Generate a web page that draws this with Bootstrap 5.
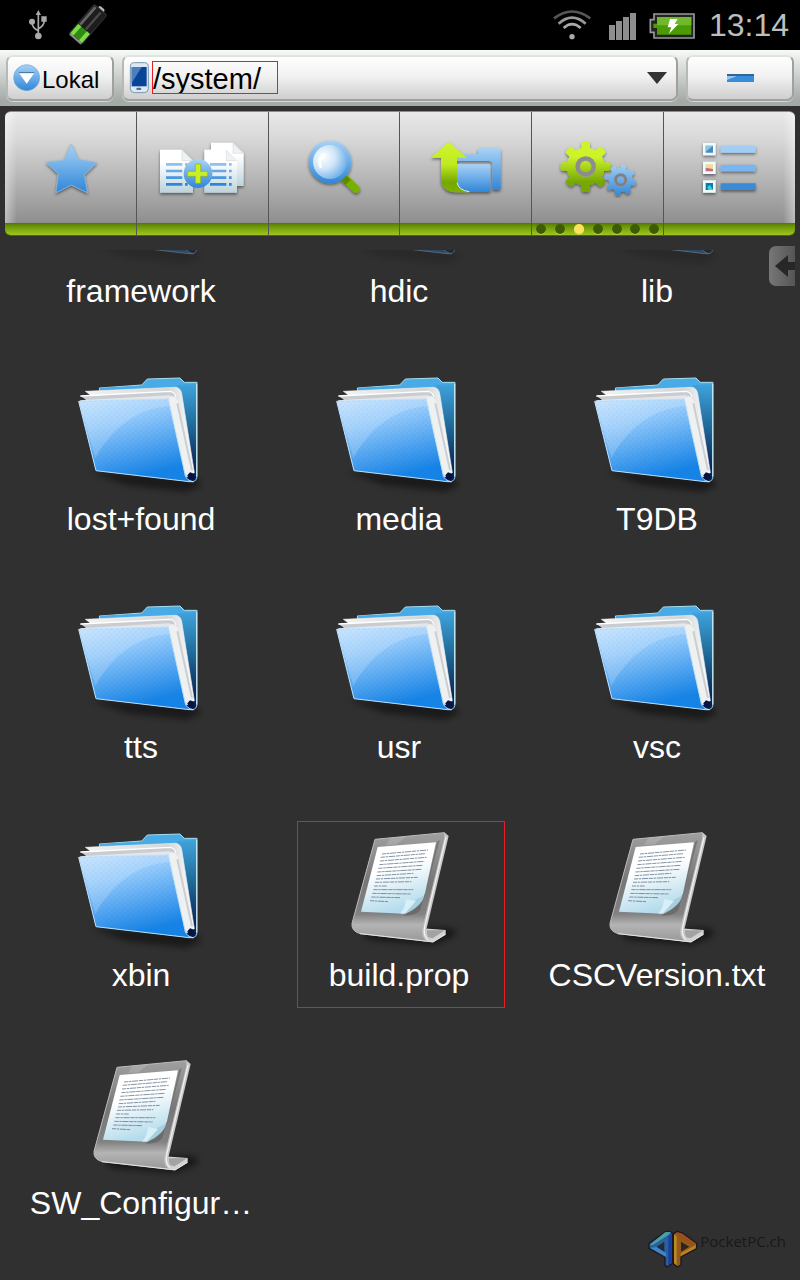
<!DOCTYPE html>
<html lang="de">
<head>
<meta charset="utf-8">
<meta name="viewport" content="width=device-width, initial-scale=1">
<title>/system/</title>
<link rel="stylesheet" href="https://cdn.jsdelivr.net/npm/bootstrap@5.3.0/dist/css/bootstrap.min.css">
<style>
body{background:#303030;color:#fff;font-family:"Liberation Sans",Arial,sans-serif}
svg{display:block;flex:none}
.statusbar{height:50px;background:#000;padding-right:11px}
.clock{font-size:32px;line-height:50px;color:#bebebe;padding-left:8px}
.pathbar{height:56px;padding:5px 6px;gap:8px;background:linear-gradient(#f7fbf8,#e4e8e5 20%,#a4aaa6 90%)}
.glossy{height:46px;border:2px solid #a0a0a0;border-top-color:#e0e2e0;border-left-color:#b8b8b8;border-radius:7px;background:linear-gradient(#fff,#f2f2f2 45%,#cfcfcf);color:#000;box-shadow:0 1px 0 #d5d8d5}
.local{width:108px;font-size:24px;padding:3px 0 0 4px}
.minus{width:108px;padding:0}
.pathinput{width:126px;height:33px;margin-top:-1px;border:1px solid #ed1c24;background:transparent;color:#000;font-size:29px;line-height:31px;padding:3px 0 0}
.dropper{border:0;background:none;padding:0 8px}
.toolbar{margin:5px 5px 0;height:125px;border-radius:6px;overflow:hidden;border-top:1px solid #8c8c8c;border-bottom:1px solid #4c6a04;background:linear-gradient(#e9e9e9,#d8d8d8 22%,#aaa 65%,#8e8e8e 111px,#4f7803 111px,#6c9208 114px,#9cc81c)}
.tool{flex:1 1 0;border:0;border-right:1px solid #555;background:none;padding:0}
.tool:first-child{background:linear-gradient(90deg,#ffffff66,#fff0 12px) 0 0/100% 111px no-repeat}
.tool:last-child{border-right:0;background:linear-gradient(270deg,#ffffff66,#fff0 12px) 0 0/100% 111px no-repeat}
.face{height:112px}
.pages{height:12px;padding:0 4px}
.pagedot{width:10px;height:10px;border-radius:50%;background:#3f5c05;box-shadow:0 1px 0 #b9d24a}
.pagedot.current{background:#ffe25c}
.browser{position:relative;margin-top:14px}
.drawer{position:absolute;top:-4px;right:5px;width:26px;height:40px;padding:0;border:0;border-radius:7px 0 0 7px;background:linear-gradient(90deg,#777,#555);overflow:hidden}
.files{display:grid;grid-template-columns:repeat(3,minmax(0,1fr));padding:0 14px 0 12px}
.entry{position:relative;gap:3px;padding-bottom:57px;color:#fff;text-decoration:none}
.entry span{font-size:32px;line-height:40px}
.scrolled{height:18px;overflow:hidden;opacity:.3}
.marked::after{content:"";position:absolute;top:-3px;left:27px;width:208px;height:187px;border:1px solid #ed1c24}
.brand{align-self:end;justify-self:end;font:15px/24px "Open Sans",sans-serif;color:#191919;gap:2px;padding-bottom:11px;text-decoration:none}
</style>
</head>
<body>
<svg class="position-absolute" width="0" height="0" aria-hidden="true">
<defs>
<linearGradient id="blue" x1="0" y1="0" x2="0" y2="1"><stop offset="0" stop-color="#a8d2f6"/><stop offset="1" stop-color="#2f86d8"/></linearGradient>
<linearGradient id="lime" x1="0" y1="0" x2="0" y2="1"><stop offset="0" stop-color="#d0f52c"/><stop offset=".45" stop-color="#bfea20"/><stop offset=".8" stop-color="#75a803"/><stop offset="1" stop-color="#7db005"/></linearGradient>
<linearGradient id="sheet" x1="0" y1="0" x2="0" y2="1"><stop offset=".3" stop-color="#fff"/><stop offset="1" stop-color="#bcd3da"/></linearGradient>
<linearGradient id="front" x1="0" y1="0" x2=".35" y2="1"><stop offset="0" stop-color="#c2e2ff"/><stop offset=".35" stop-color="#92c9fb"/><stop offset="1" stop-color="#1683e6"/></linearGradient>
<linearGradient id="back" x1="0" y1="0" x2="0" y2="1"><stop offset="0" stop-color="#5cb9ef"/><stop offset=".4" stop-color="#2677ad"/><stop offset="1" stop-color="#06154a"/></linearGradient>
<linearGradient id="side" x1="0" y1="0" x2="0" y2="1"><stop offset="0" stop-color="#3fa3dc"/><stop offset=".5" stop-color="#1f6896"/><stop offset="1" stop-color="#0b1f50"/></linearGradient>
<linearGradient id="leaf" x1="0" y1="0" x2="1" y2="0"><stop offset="0" stop-color="#f4f4f4"/><stop offset=".75" stop-color="#d2d5d8"/><stop offset="1" stop-color="#fff"/></linearGradient>
<linearGradient id="metal" x1="0" y1="0" x2="0" y2="1"><stop offset="0" stop-color="#a0a0a0"/><stop offset=".45" stop-color="#777"/><stop offset=".75" stop-color="#828282"/><stop offset=".85" stop-color="#b4b4b4"/><stop offset="1" stop-color="#999"/></linearGradient>
<linearGradient id="note" x1="0" y1="0" x2=".3" y2="1"><stop offset=".45" stop-color="#fff"/><stop offset="1" stop-color="#b5dcec"/></linearGradient>
<radialGradient id="lens" cx=".3" cy=".35" r=".8"><stop offset="0" stop-color="#fff"/><stop offset=".45" stop-color="#cfe6f8"/><stop offset="1" stop-color="#5ba5e4"/></radialGradient>
<pattern id="weave" width="16" height="16" patternUnits="userSpaceOnUse"><path d="M0 4h6M8 12h6" stroke="#0a63b8" stroke-opacity=".09" stroke-width="5"/></pattern>
<filter id="drop" x="-20%" y="-20%" width="140%" height="150%"><feDropShadow dx="0" dy="5" stdDeviation="4" flood-opacity=".5"/></filter>
<filter id="haze" x="-30%" y="-100%" width="160%" height="300%"><feGaussianBlur stdDeviation="10"/></filter>
<symbol id="folder" viewBox="51 24 384 384">
<path d="M90 335L400 350 425 375 380 395 200 375z" fill="#000" opacity=".45" filter="url(#haze)"/>
<path d="M118 84L245 75 262 57 360 54 373 67H411V345Q411 363 398 365L150 320z" fill="url(#back)" stroke="#a5dcf2" stroke-width="3"/>
<path d="M120 83L246 77 263 59 359 56 372 70H408V150L120 90z" fill="#48abe6"/>
<path d="M408 72V330H398L365 105 350 75z" fill="url(#side)"/>
<path d="M410 72V350" stroke="#c9edf5" stroke-width="3"/>
<path d="M76 94L345 82Q361 82 365 100L403 338 384 350 140 290 90 104z" fill="url(#leaf)" stroke="#e9ecef" stroke-width="2"/>
<path d="M61 108L330 94Q345 94 349 110L398 343 375 350 140 290 76 118z" fill="#c9ccd0"/>
<path d="M61 108L328 94Q344 94 348 112" fill="none" stroke="#fff" stroke-width="4"/>
<path d="M60 121L325 106Q337 106 341 122L388 345 370 352 140 290z" fill="#e4e6e9"/>
<path d="M325 117L336 108Q352 110 355 128L401 337 386 348 376 340z" fill="#eff1f1"/>
<path d="M352 130L396 330" stroke="#b4b9bd" stroke-width="6" opacity=".6"/>
<path d="M382 346L390 337 402 341 402 355 388 358z" fill="#071440"/>
<path d="M56 124L325 117 376 347Q381 362 400 365L388 365 108 332z" fill="url(#front)" stroke="#bde2ff" stroke-width="3"/>
<path d="M56 124L325 117 376 347Q381 362 390 365L108 332z" fill="url(#weave)"/>
<path d="M58 126L323 119 328 138C230 145 155 205 106 294z" fill="#fff" opacity=".18"/>
</symbol>
<symbol id="stand" viewBox="135 27 384 384">
<path d="M210 350L470 338Q520 345 480 370L430 390 240 375z" fill="#000" opacity=".5" filter="url(#haze)"/>
<path d="M396 340L467 345V359L429 382 395 378z" fill="#d2d2d2"/>
<path d="M410 346L465 346 428 370 412 366z" fill="#a2a2a2"/>
<path d="M463 52L476 63 410 340Q407 360 420 371L398 376 390 340z" fill="#c7c7c7"/>
<path d="M255 73L463 53 464 70 399 337Q393 365 410 378L210 356Q183 348 186 325z" fill="url(#metal)" stroke="#bbb" stroke-width="3"/>
<path d="M300 70L348 65 320 88 288 91z" fill="#fff" opacity=".15"/>
<path d="M449 75L391 285Q375 304 340 302L350 296Q395 275 405 240L442 80z" fill="#5f5f5f" opacity=".65"/>
<path d="M468 66L404 335Q399 362 414 374" stroke="#f0f0f0" stroke-width="4" fill="none"/>
<path d="M210 356L412 379 429 381 466 358" stroke="#e4e4e4" stroke-width="3" fill="none"/>
<path d="M263 96L438 82 405 235Q392 275 345 296L213 290z" fill="url(#note)"/>
<path d="M345 296Q395 275 403 241L375 256z" fill="#a6cfdf"/><path d="M331 296Q346 278 348 252L378 258 345 295z" fill="#d9eff7"/>
<g stroke="#52677d" stroke-width="3" stroke-dasharray="13 2 7 2 19 2" opacity=".7"><path d="M276 117L414 105M272 127L405 116M270 138L410 127M268 149L403 139M265 160L397 151M262 171L394 163M260 182L370 175M258 192L383 187M255 202L364 200M252 213L290 213M250 224L370 224M247 235L363 237M244 246L330 248M240 257L294 260"/></g>
</symbol>
</defs>
</svg>

<header>
<div class="statusbar d-flex align-items-center justify-content-between">
<svg width="120" height="50" viewBox="0 0 360 150" role="img" aria-label="USB, Akku">
<g fill="none" stroke="#aaa" stroke-width="5"><path d="M115 108V40M115 92Q96 84 96 66M115 86Q133 78 133 60"/></g><g fill="#aaa"><circle cx="115" cy="108" r="10"/><circle cx="96" cy="65" r="9"/><path d="M115 30L107 45H123zM124 49H140V65H124z"/></g>
<g transform="rotate(41 262 74)"><rect x="252" y="6" width="22" height="14" rx="5" fill="#bbb"/><rect x="238" y="14" width="50" height="118" rx="7" fill="#1d1d1d" stroke="#333" stroke-width="3"/><path d="M240 90H286V126H240z" fill="#2f8a14"/><path d="M240 90H252V126H240zM274 90H286V126H274z" fill="#7edb45"/><path d="M246 18V88" stroke="#666" stroke-width="8"/><path d="M268 20V88" stroke="#4a4a4a" stroke-width="7"/><path d="M241 129H285" stroke="#999" stroke-width="5"/></g>
</svg>
<div class="d-flex">
<svg width="160" height="50" viewBox="30 0 480 150" role="img" aria-label="WLAN, Signal, Akku lädt">
<g fill="none" stroke-width="8"><path d="M69 55Q123 14 178 55" stroke="#555"/><path d="M83 71Q123 35 164 71" stroke="#999"/><path d="M98 84Q123 61 149 84" stroke="#aaa"/></g><circle cx="123" cy="110" r="8" fill="#aaa"/>
<path d="M234 75h18v45h-18zM255 63h18v57h-18zM276 51h18v69h-18zM297 39h18v81h-18z" fill="#8e8e8e"/>
<path d="M369 42H489V114H369V97H358V59H369z" fill="#222" stroke="#999" stroke-width="5"/><path d="M378 51H481V104H378V84H367V71H378z" fill="#4b9b05"/><path d="M378 51H481V76H378z" fill="#70b92c"/><path d="M417 57H440L431 72H442L414 101 421 82H410z" fill="#fff"/>
</svg>
<time class="clock">13:14</time>
</div>
</div>
<div class="pathbar d-flex">
<button type="button" class="glossy local d-flex align-items-center">
<svg class="mb-1" width="30" height="30" viewBox="36 186 90 90" aria-hidden="true"><circle cx="80" cy="230" r="39" fill="url(#blue)" stroke="#65a6dc" stroke-width="2"/><path d="M57 216H103L80 248z" fill="#fff"/><path d="M57 215H103" stroke="#456f94" stroke-width="3"/></svg>Lokal
</button>
<div class="glossy flex-grow-1 d-flex align-items-center ps-1">
<svg width="24" height="34" viewBox="384 184 72 102" aria-hidden="true"><rect x="391" y="189" width="54" height="90" rx="12" fill="#dce8f2" stroke="#7a96ae" stroke-width="3"/><path d="M395 202H440V260H395z" fill="#0a4499"/><path d="M395 202H425L395 250z" fill="#4c80bd"/><rect x="409" y="264" width="15" height="7" rx="3" fill="#527291"/></svg>
<input class="pathinput" type="text" value="/system/" aria-label="Pfad">
<button type="button" class="dropper ms-auto" aria-label="Verlauf"><svg width="22" height="14" viewBox="0 0 22 14"><path d="M1 1H21L11 13z" fill="#333"/></svg></button>
</div>
<button type="button" class="glossy minus d-flex align-items-center justify-content-center" aria-label="Minimieren"><svg width="27" height="8" viewBox="0 0 27 8"><path d="M0 0H27V8H0z" fill="#378cdc"/><path d="M0 1H27" stroke="#34658f" stroke-width="2"/><path d="M0 2H10L0 6z" fill="#91c5f2"/></svg></button>
</div>
<nav class="toolbar d-flex" aria-label="Werkzeuge">
<button type="button" class="tool d-flex flex-column" aria-label="Favoriten"><span class="face w-100 d-flex align-items-center justify-content-center"><svg width="90" height="60" viewBox="78 114 270 180"><path filter="url(#drop)" d="M217 132L238 178 294 188 256 224 265 278 217 255 171 278 178 222 141 187 196 180z" fill="url(#blue)" stroke="#8cbbe4" stroke-width="2"/></svg></span></button>
<button type="button" class="tool d-flex flex-column" aria-label="Kopieren"><span class="face w-100 d-flex align-items-center justify-content-center"><svg width="90" height="60" viewBox="471 114 270 180">
<g filter="url(#drop)" fill="url(#sheet)"><path d="M633 128H699L731 160V258H633z"/><path d="M480 149H546L579 182V278H480z"/><path d="M613 149H679L711 182V278H613z"/></g>
<g fill="#eef3f5" stroke="#bbb" stroke-width="1"><path d="M699 130V160H729zM546 151V182H577zM679 151V182H709z"/></g>
<g stroke-width="8" stroke-dasharray="49 8 8 100"><path d="M498 193H563M630 193H696" stroke="#8dc1f0"/><path d="M498 213H563M630 213H696" stroke="#67a9e7"/><path d="M498 233H563M630 233H696" stroke="#4797e1"/><path d="M498 253H563M630 253H696" stroke="#2d86dc"/></g>
<circle cx="594" cy="221" r="43" fill="url(#blue)"/><path d="M586 192H602V214H623V229H602V250H586V229H562V214H586z" fill="#c9f024" stroke="#8fae22" stroke-width="2"/></svg></span></button>
<button type="button" class="tool d-flex flex-column" aria-label="Suchen"><span class="face w-100 d-flex align-items-center justify-content-center"><svg width="90" height="60" viewBox="87 114 270 180"><g filter="url(#drop)"><path d="M252 232L288 267" stroke="#79b004" stroke-width="23" stroke-linecap="round"/><path d="M250 233L264 247" stroke="#5c8b03" stroke-width="22"/><circle cx="210" cy="186" r="64" fill="url(#blue)"/></g><circle cx="210" cy="186" r="51" fill="url(#lens)"/><path d="M192 164Q173 180 182 199" fill="none" stroke="#fff" stroke-width="9" stroke-linecap="round"/></svg></span></button>
<button type="button" class="tool d-flex flex-column" aria-label="Ordner aufwärts"><span class="face w-100 d-flex align-items-center justify-content-center"><svg width="90" height="60" viewBox="483 114 270 180"><g filter="url(#drop)"><path d="M580 163H654V150Q654 145 660 145H716Q722 145 722 151V264Q722 270 716 270H697V193Q697 183 687 183H580z" fill="url(#blue)"/><path d="M586 193H684Q691 193 691 200V276H628Q586 271 586 248z" fill="url(#blue)"/><path d="M567 126L620 173H591V248Q596 271 628 277H590Q543 277 543 235V173H512z" fill="url(#lime)"/></g><path d="M591 248Q596 271 628 275" stroke="#e6f3d6" stroke-width="3" fill="none"/></svg></span></button>
<button type="button" class="tool d-flex flex-column" aria-label="Einstellungen"><span class="face w-100 d-flex align-items-center justify-content-center"><svg width="90" height="60" viewBox="99 114 270 180">
<defs><g id="teeth"><rect x="-13" y="-75" width="26" height="150" rx="7"/><rect x="-13" y="-75" width="26" height="150" rx="7" transform="rotate(45)"/><rect x="-13" y="-75" width="26" height="150" rx="7" transform="rotate(90)"/><rect x="-13" y="-75" width="26" height="150" rx="7" transform="rotate(135)"/><circle r="57"/></g>
<linearGradient id="limeall" gradientUnits="userSpaceOnUse" x1="0" y1="126" x2="0" y2="276"><stop offset=".3" stop-color="#cdf32a"/><stop offset=".8" stop-color="#75a803"/></linearGradient>
<mask id="cogmask" maskUnits="userSpaceOnUse" x="96" y="114" width="270" height="180"><use href="#teeth" transform="translate(197 200)" fill="#fff"/><circle cx="197" cy="200" r="31"/><circle cx="197" cy="200" r="17" fill="#fff"/></mask>
<mask id="smallmask" maskUnits="userSpaceOnUse" x="96" y="114" width="270" height="180"><use href="#teeth" transform="translate(302 240) rotate(12) scale(.62)" fill="#fff"/><circle cx="302" cy="240" r="20"/><circle cx="302" cy="240" r="11" fill="#fff"/></mask></defs>
<g filter="url(#drop)"><rect x="96" y="114" width="270" height="180" fill="url(#limeall)" mask="url(#cogmask)"/></g><g filter="url(#drop)"><rect x="252" y="190" width="100" height="100" fill="url(#blue)" mask="url(#smallmask)"/></g><circle cx="197" cy="200" r="24" fill="none" stroke="#8d8d8d" stroke-width="13"/><circle cx="302" cy="240" r="15" fill="none" stroke="#808080" stroke-width="8"/></svg></span>
<span class="pages w-100 d-flex align-items-center justify-content-between"><i class="pagedot"></i><i class="pagedot"></i><i class="pagedot current"></i><i class="pagedot"></i><i class="pagedot"></i><i class="pagedot"></i><i class="pagedot"></i></span></button>
<button type="button" class="tool d-flex flex-column" aria-label="Ansicht"><span class="face w-100 d-flex align-items-center justify-content-center"><svg width="90" height="60" viewBox="495 114 270 180"><g filter="url(#drop)"><path d="M549 129h38v37h-38zM549 185h38v37h-38zM549 241h38v37h-38z" fill="#eefbff"/><path d="M602 138h105v20H602z" fill="#a3cdf4"/><path d="M602 194h105v20H602z" fill="#79b5ee"/><path d="M602 250h105v20H602z" fill="#398bd8"/></g><path d="M557 137h22v21h-22z" fill="#4a89c6"/><path d="M557 137h22l-22 18z" fill="#8fc7d4"/><path d="M557 193h22v21h-22z" fill="#f1dc8e"/><path d="M557 203l22 4v7h-22z" fill="#c56a8c"/><path d="M557 249h22v21h-22z" fill="#1279a8"/><path d="M562 260l8-5 9 15h-14z" fill="#39d0d8"/></svg></span></button>
</nav>
</header>

<main class="browser">
<button type="button" class="drawer" aria-label="Seitenleiste"><svg width="26" height="40" viewBox="0 0 26 40"><path d="M6 20L19 9V16H26V24H19V31z" fill="#272727"/></svg></button>
<div class="files">
<a href="#" class="entry d-flex flex-column align-items-center"><div class="scrolled d-flex align-items-end"><svg width="128" height="128"><use href="#folder"/></svg></div><span>framework</span></a>
<a href="#" class="entry d-flex flex-column align-items-center"><div class="scrolled d-flex align-items-end"><svg width="128" height="128"><use href="#folder"/></svg></div><span>hdic</span></a>
<a href="#" class="entry d-flex flex-column align-items-center"><div class="scrolled d-flex align-items-end"><svg width="128" height="128"><use href="#folder"/></svg></div><span>lib</span></a>
<a href="#" class="entry d-flex flex-column align-items-center"><svg width="128" height="128"><use href="#folder"/></svg><span>lost+found</span></a>
<a href="#" class="entry d-flex flex-column align-items-center"><svg width="128" height="128"><use href="#folder"/></svg><span>media</span></a>
<a href="#" class="entry d-flex flex-column align-items-center"><svg width="128" height="128"><use href="#folder"/></svg><span>T9DB</span></a>
<a href="#" class="entry d-flex flex-column align-items-center"><svg width="128" height="128"><use href="#folder"/></svg><span>tts</span></a>
<a href="#" class="entry d-flex flex-column align-items-center"><svg width="128" height="128"><use href="#folder"/></svg><span>usr</span></a>
<a href="#" class="entry d-flex flex-column align-items-center"><svg width="128" height="128"><use href="#folder"/></svg><span>vsc</span></a>
<a href="#" class="entry d-flex flex-column align-items-center"><svg width="128" height="128"><use href="#folder"/></svg><span>xbin</span></a>
<a href="#" class="entry marked d-flex flex-column align-items-center"><svg width="128" height="128"><use href="#stand"/></svg><span>build.prop</span></a>
<a href="#" class="entry d-flex flex-column align-items-center"><svg width="128" height="128"><use href="#stand"/></svg><span>CSCVersion.txt</span></a>
<a href="#" class="entry d-flex flex-column align-items-center"><svg width="128" height="128"><use href="#stand"/></svg><span>SW_Configur…</span></a>
<div></div>
<a href="#" class="brand d-flex"><svg width="50" height="40" viewBox="21 24 150 120" aria-hidden="true"><g stroke="#1c1720" stroke-width="4" stroke-linejoin="round"><path d="M72 33L89 31 94 38V128L78 138 72 132V108L24 82V67z" fill="#2b609f"/><path d="M108 31L124 36 167 67V82L120 108V132L108 138 98 128V38z" fill="#93591c"/></g><path d="M72 34L90 32 82 42 35 72 26 72z" fill="#4aa0a2"/><path d="M28 81L75 108V96L46 78z" fill="#3f86c8"/><path d="M82 45L92 38V126L82 133z" fill="#173fa0"/><path d="M70 62V92L47 77z" fill="#262a38"/><path d="M99 40L107 46V133L99 126z" fill="#b98a22"/><path d="M110 34L124 38 164 68 152 72 112 46z" fill="#9c4f16"/><path d="M118 106L164 82V72L120 96z" fill="#b98323"/><path d="M120 62V92L145 77z" fill="#2d251f"/></svg>PocketPC.ch</a>
</div>
</main>
<script src="https://cdn.jsdelivr.net/npm/bootstrap@5.3.0/dist/js/bootstrap.bundle.min.js"></script>
</body>
</html>
